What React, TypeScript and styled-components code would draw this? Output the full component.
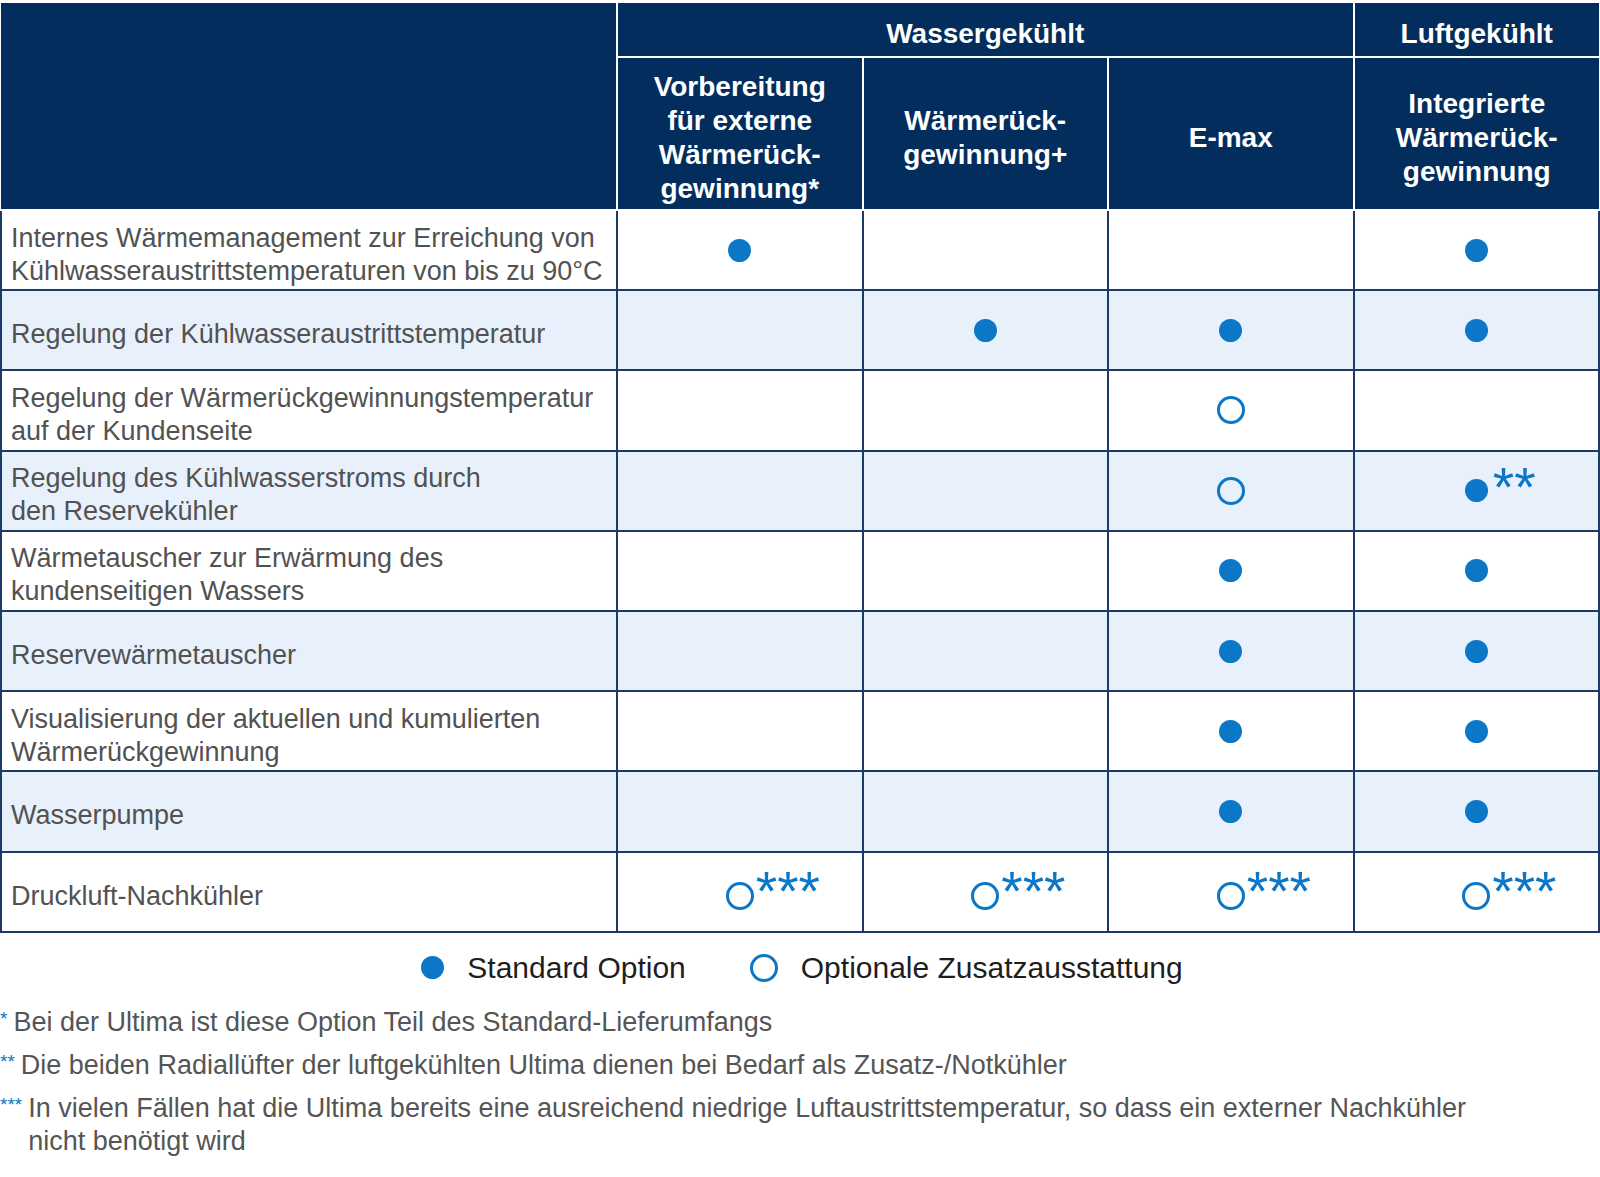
import * as React from "react";
import styled, { createGlobalStyle } from "styled-components";

const GlobalStyle = createGlobalStyle`
  body {
    margin: 0;
    background: #ffffff;
    font-family: "Liberation Sans", Arial, sans-serif;
  }
`;

const Page = styled.div`
  width: 1600px;
  padding-top: 3px;
`;

const Table = styled.table`
  width: 1600px;
  border-collapse: collapse;
  table-layout: fixed;
`;

const HeadCell = styled.th<{ $w?: number; $h: number }>`
  background: #022d5c;
  color: #ffffff;
  font-weight: 700;
  font-size: 28px;
  line-height: 34px;
  text-align: center;
  vertical-align: middle;
  height: ${(p) => p.$h}px;
  width: ${(p) => (p.$w ? `${p.$w}px` : "auto")};
  border: 2px solid #ffffff;
  border-top: none;
  padding: 8px 0 0;
  &:first-child {
    border-left: none;
  }
  &:last-child {
    border-right: none;
  }
`;

const Row = styled.tr<{ $shade: boolean }>`
  background: ${(p) => (p.$shade ? "#e8f1fb" : "#ffffff")};
`;

const LabelCell = styled.td`
  height: 69.2px;
  padding: 9px 0 0 9px;
  border: 2px solid #1c3a66;
  color: #525252;
  font-size: 27px;
  line-height: 33px;
  vertical-align: middle;
  white-space: nowrap;
`;

const MarkCell = styled.td`
  border: 2px solid #1c3a66;
  text-align: center;
  vertical-align: middle;
`;

const Mark = styled.span<{ $open: boolean; $low?: boolean }>`
  position: relative;
  display: inline-block;
  width: ${(p) => (p.$open ? 28 : 23)}px;
  height: ${(p) => (p.$open ? 28 : 23)}px;
  box-sizing: border-box;
  border-radius: 50%;
  vertical-align: middle;
  top: ${(p) => (p.$low ? 4 : 0)}px;
  background: ${(p) => (p.$open ? "transparent" : "#0b77c6")};
  border: ${(p) => (p.$open ? "3px solid #0b77c6" : "none")};
`;

const Stars = styled.span<{ $open: boolean }>`
  position: absolute;
  left: 100%;
  top: ${(p) => (p.$open ? -21 : -19)}px;
  margin-left: 5px;
  color: #0b77c6;
  font-size: 55px;
  line-height: 55px;
  white-space: nowrap;
`;

const Legend = styled.div`
  display: flex;
  justify-content: center;
  align-items: center;
  gap: 64px;
  margin: 18px 0 21px 4px;
`;

const LegendItem = styled.div`
  display: flex;
  align-items: center;
  gap: 23px;
  color: #1e1e1e;
  font-size: 30px;
`;

const Notes = styled.div`
  display: flex;
  flex-direction: column;
  gap: 10px;
`;

const Note = styled.div`
  display: flex;
  gap: 6px;
  color: #555555;
  font-size: 27px;
  line-height: 33px;
`;

const NoteMark = styled.span`
  color: #0b77c6;
  font-size: 19px;
  line-height: 26px;
  flex: none;
`;

type Cell = "" | "dot" | "ring";
type Line = { label: string[]; cells: Cell[]; stars?: (string | undefined)[] };

const rows: Line[] = [
  {
    label: ["Internes Wärmemanagement zur Erreichung von", "Kühlwasseraustrittstemperaturen von bis zu 90°C"],
    cells: ["dot", "", "", "dot"],
  },
  { label: ["Regelung der Kühlwasseraustrittstemperatur"], cells: ["", "dot", "dot", "dot"] },
  {
    label: ["Regelung der Wärmerückgewinnungstemperatur", "auf der Kundenseite"],
    cells: ["", "", "ring", ""],
  },
  {
    label: ["Regelung des Kühlwasserstroms durch", "den Reservekühler"],
    cells: ["", "", "ring", "dot"],
    stars: [undefined, undefined, undefined, "**"],
  },
  {
    label: ["Wärmetauscher zur Erwärmung des", "kundenseitigen Wassers"],
    cells: ["", "", "dot", "dot"],
  },
  { label: ["Reservewärmetauscher"], cells: ["", "", "dot", "dot"] },
  {
    label: ["Visualisierung der aktuellen und kumulierten", "Wärmerückgewinnung"],
    cells: ["", "", "dot", "dot"],
  },
  { label: ["Wasserpumpe"], cells: ["", "", "dot", "dot"] },
  {
    label: ["Druckluft-Nachkühler"],
    cells: ["ring", "ring", "ring", "ring"],
    stars: ["***", "***", "***", "***"],
  },
];

const lines = (parts: string[]) =>
  parts.map((p, i) => (
    <React.Fragment key={i}>
      {i > 0 && <br />}
      {p}
    </React.Fragment>
  ));

const App = () => {
  return (
    <Page>
      <GlobalStyle />
      <Table>
        <thead>
          <tr>
            <HeadCell $w={615} $h={45} rowSpan={2} />
            <HeadCell $h={45} colSpan={3}>Wassergekühlt</HeadCell>
            <HeadCell $h={45}>Luftgekühlt</HeadCell>
          </tr>
          <tr>
            <HeadCell $w={247} $h={143}>
              {lines(["Vorbereitung", "für externe", "Wärmerück-", "gewinnung*"])}
            </HeadCell>
            <HeadCell $w={246} $h={143}>{lines(["Wärmerück-", "gewinnung+"])}</HeadCell>
            <HeadCell $w={246} $h={143}>E-max</HeadCell>
            <HeadCell $w={246} $h={143}>
              {lines(["Integrierte", "Wärmerück-", "gewinnung"])}
            </HeadCell>
          </tr>
        </thead>
        <tbody>
          {rows.map((r, i) => (
            <Row key={i} $shade={i % 2 === 1}>
              <LabelCell>{lines(r.label)}</LabelCell>
              {r.cells.map((c, j) => (
                <MarkCell key={j}>
                  {c && (
                    <Mark $open={c === "ring"} $low={!!r.stars?.[j] && c === "ring"}>
                      {r.stars?.[j] && <Stars $open={c === "ring"}>{r.stars[j]}</Stars>}
                    </Mark>
                  )}
                </MarkCell>
              ))}
            </Row>
          ))}
        </tbody>
      </Table>
      <Legend>
        <LegendItem>
          <Mark $open={false} />
          Standard Option
        </LegendItem>
        <LegendItem>
          <Mark $open />
          Optionale Zusatzausstattung
        </LegendItem>
      </Legend>
      <Notes>
        <Note>
          <NoteMark>*</NoteMark>
          <span>Bei der Ultima ist diese Option Teil des Standard-Lieferumfangs</span>
        </Note>
        <Note>
          <NoteMark>**</NoteMark>
          <span>Die beiden Radiallüfter der luftgekühlten Ultima dienen bei Bedarf als Zusatz-/Notkühler</span>
        </Note>
        <Note>
          <NoteMark>***</NoteMark>
          <span>
            In vielen Fällen hat die Ultima bereits eine ausreichend niedrige Luftaustrittstemperatur, so dass ein externer Nachkühler
            <br />
            nicht benötigt wird
          </span>
        </Note>
      </Notes>
    </Page>
  );
};

export default App;
